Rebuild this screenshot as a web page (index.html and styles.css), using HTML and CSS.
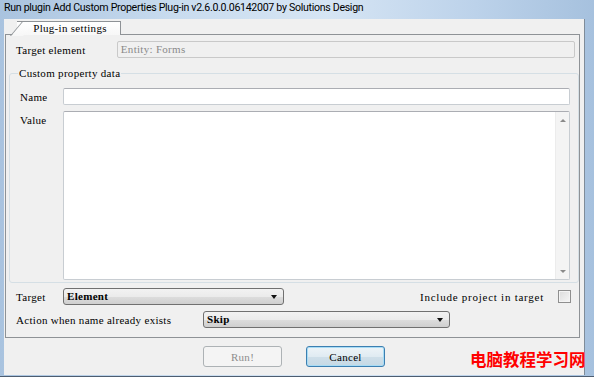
FILE: index.html
```html
<!DOCTYPE html>
<html lang="en">
<head>
    <meta charset="UTF-8">
    <title>Run plugin</title>
    <link rel="stylesheet" href="styles.css">
</head>
<body>
    <div class="window">
        <div class="titlebar">Run plugin Add Custom Properties Plug-in v2.6.0.0.06142007 by Solutions Design</div>
        <div class="client">
            <div class="tabs">
                <div class="tab">Plug-in settings</div>
            </div>
            <div class="tab-page">
                <div class="row target-element">
                    <label class="lbl">Target element</label>
                    <div class="textbox disabled">Entity: Forms</div>
                </div>

                <fieldset class="group">
                    <legend>Custom property data</legend>
                    <div class="row name-row">
                        <label class="lbl">Name</label>
                        <div class="textbox"></div>
                    </div>
                    <div class="row value-row">
                        <label class="lbl">Value</label>
                        <div class="value-box">
                            <div class="value-text"></div>
                            <div class="scroll">
                                <span class="arrow up"></span>
                                <span class="arrow down"></span>
                            </div>
                        </div>
                    </div>
                </fieldset>

                <div class="row target-row">
                    <label class="lbl">Target</label>
                    <div class="combo target-combo">Element<span class="caret"></span></div>
                    <span class="lbl include">Include project in target</span>
                    <span class="check"></span>
                </div>
                <div class="row action-row">
                    <label class="lbl">Action when name already exists</label>
                    <div class="combo action-combo">Skip<span class="caret"></span></div>
                </div>
            </div>
            <div class="footer">
                <button class="btn" disabled>Run!</button>
                <button class="btn default">Cancel</button>
            </div>
        </div>
        <div class="watermark">电脑教程学习网</div>
    </div>
</body>
</html>
```

FILE: styles.css
```css
body {
    margin: 0;
    background: #ffffff;
    font-family: 'Liberation Serif', serif;
}

.window {
    position: relative;
    width: 594px;
    height: 377px;
    box-sizing: border-box;
    display: flex;
    flex-direction: column;
    background: linear-gradient(to right, #a9c3df 0%, #c9dcef 30%, #d6e5f4 55%, #bcd2ea 80%, #a6c1de 100%);
    border-bottom: 1px solid #4d5d70;
    box-shadow: 0 2px 3px rgba(0, 0, 0, 0.25);
}

.titlebar {
    height: 19px;
    line-height: 15px;
    padding-left: 4px;
    font-family: Roboto, sans-serif;
    font-size: 10.6px;
    letter-spacing: -0.3px;
    color: #000;
    white-space: nowrap;
    overflow: hidden;
}

.client {
    flex: 1;
    margin: 0 9px 1px 4px;
    background: #f0f0f0;
    border-right: 1px solid #7f8c99;
    display: flex;
    flex-direction: column;
}

.tabs {
    height: 15px;
    padding-left: 1px;
    display: flex;
    align-items: flex-end;
}

.tab {
    position: relative;
    width: 100px;
    height: 13px;
    margin-left: 12px;
    margin-bottom: -1px;
    padding-left: 3px;
    background: linear-gradient(#ffffff, #f7f7f7);
    border: 1px solid #8e9296;
    border-left: none;
    border-bottom: none;
    font-size: 11px;
    letter-spacing: 0.3px;
    line-height: 13px;
    text-align: center;
    color: #000;
    z-index: 1;
}

.tab::before {
    content: "";
    position: absolute;
    left: -7px;
    top: -1px;
    width: 12px;
    height: 14px;
    background: linear-gradient(#ffffff, #f7f7f7);
    border-left: 1px solid #8e9296;
    border-top: 1px solid #8e9296;
    transform: skewX(-40deg);
    transform-origin: bottom left;
    z-index: -1;
}

.tab-page {
    height: 304px;
    box-sizing: border-box;
    margin: 0 4px 0 1px;
    border: 1px solid #8e9296;
    padding: 6px 4px 0 10px;
}

.row {
    display: flex;
    align-items: center;
}

.lbl {
    font-size: 11px;
    letter-spacing: 0.3px;
    color: #000;
    white-space: nowrap;
}

.textbox {
    height: 17px;
    box-sizing: border-box;
    background: #fff;
    border: 1px solid #c8cdd2;
    border-top-color: #abadb3;
    border-radius: 2px;
    font-size: 11px;
    letter-spacing: 0.3px;
    line-height: 15px;
    padding-left: 3px;
}

.textbox.disabled {
    background: #f0f0f0;
    color: #8a8a8a;
    border-color: #c9c9c9;
}

.target-element .lbl {
    width: 101px;
}

.target-element .textbox {
    width: 459px;
}

.group {
    margin: 10px 0 0 -7px;
    width: 570px;
    box-sizing: border-box;
    border: 1px solid #d5dfe5;
    border-radius: 3px;
    padding: 9px 0 2px 10px;
}

.group legend {
    padding: 0 1px;
    margin-left: -2px;
    font-size: 11px;
    letter-spacing: 0.3px;
    color: #000;
    line-height: 11px;
}

.name-row .lbl,
.value-row .lbl {
    width: 43px;
}

.name-row .textbox {
    width: 507px;
}

.value-row {
    margin-top: 6px;
    align-items: flex-start;
}

.value-row .lbl {
    margin-top: 3px;
}

.value-box {
    width: 507px;
    height: 169px;
    box-sizing: border-box;
    background: #fff;
    border: 1px solid #c8cdd2;
    border-top-color: #abadb3;
    border-radius: 2px;
    display: flex;
}

.value-text {
    flex: 1;
}

.scroll {
    width: 13px;
    background: #f4f4f4;
    border-left: 1px solid #ececec;
    display: flex;
    flex-direction: column;
    justify-content: space-between;
    align-items: center;
    padding: 7px 0 6px;
}

.arrow {
    width: 0;
    height: 0;
    border-left: 3px solid transparent;
    border-right: 3px solid transparent;
}

.arrow.up {
    border-bottom: 3px solid #8a8a8a;
}

.arrow.down {
    border-top: 3px solid #8a8a8a;
}

.target-row {
    margin-top: 5px;
}

.target-row .lbl {
    width: 47px;
}

.combo {
    position: relative;
    height: 17px;
    box-sizing: border-box;
    border: 1px solid #707070;
    border-radius: 3px;
    background: linear-gradient(#f2f2f2 0%, #ebebeb 50%, #dddddd 51%, #cfcfcf 100%);
    font-size: 11px;
    font-weight: bold;
    letter-spacing: 0.3px;
    line-height: 15px;
    padding-left: 3px;
    color: #000;
}

.caret {
    position: absolute;
    right: 6px;
    top: 6px;
    width: 0;
    height: 0;
    border-left: 3px solid transparent;
    border-right: 3px solid transparent;
    border-top: 4px solid #111;
}

.target-combo {
    width: 221px;
}

.target-row .include {
    width: auto;
    margin-left: auto;
    letter-spacing: 0.75px;
}

.check {
    width: 13px;
    height: 13px;
    box-sizing: border-box;
    margin: 0 4px 0 14px;
    border: 1px solid #8f8f8f;
    background: linear-gradient(135deg, #dcdcdc, #f6f6f6);
    box-shadow: inset 0 0 0 1px #f4f4f4;
}

.action-row {
    margin-top: 6px;
}

.action-row .lbl {
    width: 187px;
}

.action-combo {
    width: 247px;
}

.footer {
    flex: 1;
    display: flex;
    justify-content: center;
    align-items: flex-start;
    gap: 24px;
    padding-top: 8px;
}

.btn {
    width: 79px;
    height: 21px;
    border-radius: 3px;
    font-family: 'Liberation Serif', serif;
    font-size: 11px;
    letter-spacing: 0.3px;
    padding: 0;
    color: #000;
}

.btn[disabled] {
    background: #f4f4f4;
    border: 1px solid #adb2b5;
    color: #8d8d8d;
}

.btn.default {
    background: linear-gradient(#eef4f8 0%, #e0ebf2 50%, #cfdfe9 51%, #c6d9e5 100%);
    border: 1px solid #3c7fb1;
    box-shadow: inset 0 0 0 1px #a8dcf5;
}

.watermark {
    position: absolute;
    left: 470px;
    top: 348px;
    font-family: 'Noto Sans CJK SC', sans-serif;
    font-size: 16.5px;
    font-weight: bold;
    color: #ff0000;
    white-space: nowrap;
    line-height: 22px;
}
```
